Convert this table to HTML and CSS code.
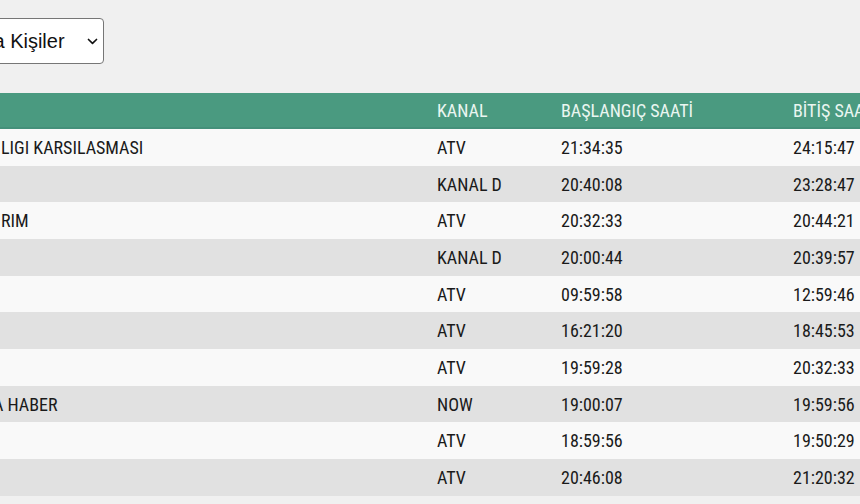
FILE: index.html
```html
<!DOCTYPE html>
<html lang="tr">
<head>
<meta charset="utf-8">
<title>Reyting Sonuçları</title>
<link rel="stylesheet" href="styles.css">
</head>
<body>
<div class="page">
  <div class="filter">
    <span class="filter-text">Ana Kişiler</span>
    <svg class="chevron" width="11" height="7" viewBox="0 0 11 7"><path d="M1.5 1.5 L5.5 5.3 L9.5 1.5" fill="none" stroke="#111" stroke-width="1.7" stroke-linecap="round" stroke-linejoin="round"/></svg>
  </div>

  <div class="table">
    <div class="row head">
      <div class="cell"></div>
      <div class="cell">KANAL</div>
      <div class="cell">BAŞLANGIÇ SAATİ</div>
      <div class="cell">BİTİŞ SAATİ</div>
    </div>
    <div class="row odd"><div class="cell">LIGI KARSILASMASI</div><div class="cell">ATV</div><div class="cell">21:34:35</div><div class="cell">24:15:47</div></div>
    <div class="row even"><div class="cell"></div><div class="cell">KANAL D</div><div class="cell">20:40:08</div><div class="cell">23:28:47</div></div>
    <div class="row odd"><div class="cell">RIM</div><div class="cell">ATV</div><div class="cell">20:32:33</div><div class="cell">20:44:21</div></div>
    <div class="row even"><div class="cell"></div><div class="cell">KANAL D</div><div class="cell">20:00:44</div><div class="cell">20:39:57</div></div>
    <div class="row odd"><div class="cell"></div><div class="cell">ATV</div><div class="cell">09:59:58</div><div class="cell">12:59:46</div></div>
    <div class="row even"><div class="cell"></div><div class="cell">ATV</div><div class="cell">16:21:20</div><div class="cell">18:45:53</div></div>
    <div class="row odd"><div class="cell"></div><div class="cell">ATV</div><div class="cell">19:59:28</div><div class="cell">20:32:33</div></div>
    <div class="row even"><div class="cell cut">A HABER</div><div class="cell">NOW</div><div class="cell">19:00:07</div><div class="cell">19:59:56</div></div>
    <div class="row odd"><div class="cell"></div><div class="cell">ATV</div><div class="cell">18:59:56</div><div class="cell">19:50:29</div></div>
    <div class="row even"><div class="cell"></div><div class="cell">ATV</div><div class="cell">20:46:08</div><div class="cell">21:20:32</div></div>
  </div>
</div>
</body>
</html>
```

FILE: styles.css
```css
html, body {
  margin: 0;
  padding: 0;
}
body {
  background: #f0f0f0;
  overflow: hidden;
  width: 860px;
  height: 504px;
}
.page {
  padding-top: 18px;
}
.filter {
  margin-left: -40px;
  width: 144px;
  height: 46px;
  box-sizing: border-box;
  border: 1px solid #767676;
  border-radius: 4px;
  background: #fff;
  display: flex;
  align-items: center;
  justify-content: space-between;
  padding: 0 5px 0 8px;
  font-family: "Liberation Sans", Arial, sans-serif;
  font-size: 20px;
  color: #111;
}
.filter-text {
  white-space: nowrap;
}
.chevron {
  display: block;
  margin-top: 0;
}
.table {
  margin-top: 28.7px;
  margin-left: -11px;
  width: 932px;
  font-family: "Roboto Condensed", "Liberation Sans Narrow", "DejaVu Sans Condensed", Roboto, sans-serif;
  font-size: 18px;
  color: #1a1a1a;
}
.row {
  display: grid;
  grid-template-columns: 436px 124px 232px 140px;
  align-items: center;
  height: 36.67px;
}
.row.head {
  height: 36.4px;
  background: #4a9a80;
  color: #eaf6f1;
  box-shadow: inset 0 -2px 0 #44907a;
}
.row.odd {
  background: #f9f9f9;
}
.row.even {
  background: #e1e1e1;
}
.cell {
  padding-left: 12px;
  white-space: nowrap;
  overflow: hidden;
}
.cell.cut {
  text-indent: -8px;
  overflow: visible;
}
```
